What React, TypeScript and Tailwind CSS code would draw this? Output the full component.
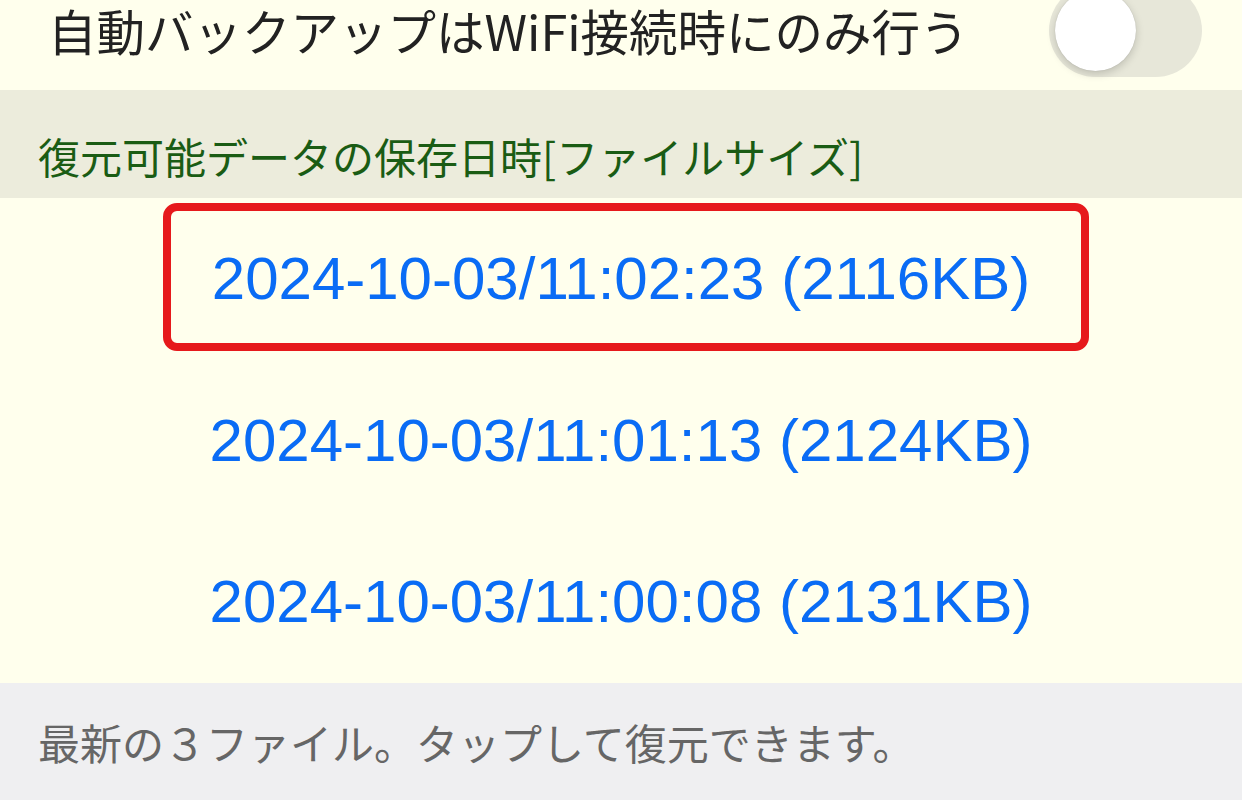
import React from "react";

const jp = { fontFamily: '"Noto Sans CJK JP", "Noto Sans", sans-serif' };

export default function App() {
  const rows = [
    { t: "2024-10-03/11:02:23 (2116KB)", hl: true },
    { t: "2024-10-03/11:01:13 (2124KB)", hl: false },
    { t: "2024-10-03/11:00:08 (2131KB)", hl: false },
  ];
  return (
    <div className="w-[1242px] h-[800px] overflow-hidden bg-[#ffffed] flex flex-col" style={jp}>
      {/* top row */}
      <div className="h-[90px] shrink-0 bg-[#ffffed]">
        <div className="h-[60px] flex items-center justify-between pl-[48px] pr-[40px]">
          <span className="text-[48.5px] leading-[60px] text-[#222222]">
            自動バックアップはWiFi接続時にのみ行う
          </span>
          <div className="relative w-[153px] h-[93px] rounded-full bg-[#e7e7d9] shrink-0">
            <div className="absolute left-[6px] top-[6px] w-[81px] h-[81px] rounded-full bg-white shadow-[0_3px_8px_rgba(0,0,0,0.18),0_0_1px_rgba(0,0,0,0.2)]" />
          </div>
        </div>
      </div>
      {/* section header */}
      <div className="h-[108px] shrink-0 bg-[#ececdc] flex items-end pl-[38px] pb-[16px]">
        <span className="text-[42px] leading-[52px] text-[#1a5c14]">
          復元可能データの保存日時[ファイルサイズ]
        </span>
      </div>
      {/* list */}
      <div className="h-[485px] shrink-0 flex flex-col bg-[#ffffed]">
        {rows.map((r, i) => (
          <div key={i} className="relative flex-1 flex items-center justify-center">
            {r.hl && (
              <div className="absolute left-[163px] top-[5px] w-[926px] h-[148px] rounded-[14px] border-[8px] border-[#e6191b]" />
            )}
            <span
              className="relative text-[60px] leading-[70px] text-[#0a6cf5]"
              style={{ fontFamily: '"Liberation Sans", Arial, sans-serif' }}
            >
              {r.t}
            </span>
          </div>
        ))}
      </div>
      {/* footer */}
      <div className="flex-1 bg-[#efeff1] pl-[38px] pt-[33px]">
        <span className="text-[42px] leading-[52px] text-[#666666]">
          最新の３ファイル。タップして復元できます。
        </span>
      </div>
    </div>
  );
}
